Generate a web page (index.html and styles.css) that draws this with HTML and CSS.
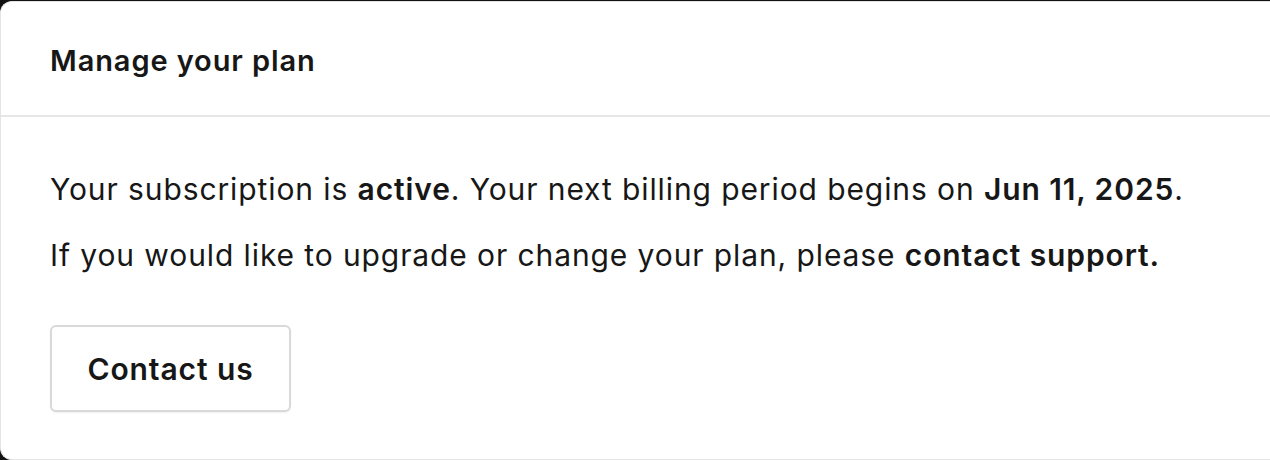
FILE: index.html
```html
<!DOCTYPE html>
<html lang="en">
<head>
  <meta charset="UTF-8">
  <meta name="viewport" content="width=device-width, initial-scale=1.0">
  <title>Manage your plan</title>
  <link rel="stylesheet" href="styles.css">
</head>
<body>

  <section class="plan-card">
    <header class="plan-header">
      <h2>Manage your plan</h2>
    </header>

    <div class="plan-body">
      <p>Your subscription is <strong>active</strong>. Your next billing period begins on <strong>Jun 11, 2025</strong>.</p>
      <p>If you would like to upgrade or change your plan, please <strong>contact support.</strong></p>
      <button class="contact-btn">Contact us</button>
    </div>
  </section>

</body>
</html>
```

FILE: styles.css
```css
body {
  font-family: Inter, "Noto Sans", sans-serif;
  background-color: #111;
  margin: 0;
  padding: 1px 0 0;
  overflow: hidden;
  color: #171717;
  letter-spacing: 0.9px;
}

.plan-card {
  background-color: #fff;
  border: 1px solid #e4e4e4;
  border-right: none;
  border-radius: 12px 0 0 12px;
  height: 457px;
  margin-right: -20px;
}

.plan-header {
  height: 109px;
  padding: 4px 49px 0;
  display: flex;
  align-items: center;
  border-bottom: 2px solid #e6e6e6;
}

.plan-header h2 {
  margin: 0;
  font-size: 29px;
  font-weight: 600;
}

.plan-body {
  padding: 54px 49px 0;
}

.plan-body p {
  margin: 0 0 30px;
  font-size: 30px;
  line-height: 36px;
}

.plan-body strong {
  font-weight: 600;
}

.contact-btn {
  margin-top: 22px;
  font-family: inherit;
  font-size: 30px;
  font-weight: 600;
  letter-spacing: 0.9px;
  color: #171717;
  background-color: #fff;
  border: 2px solid #d9d9d9;
  border-radius: 6px;
  width: 241px;
  height: 87px;
  box-shadow: 0 1px 2px rgba(0, 0, 0, 0.06);
  cursor: pointer;
}
```
